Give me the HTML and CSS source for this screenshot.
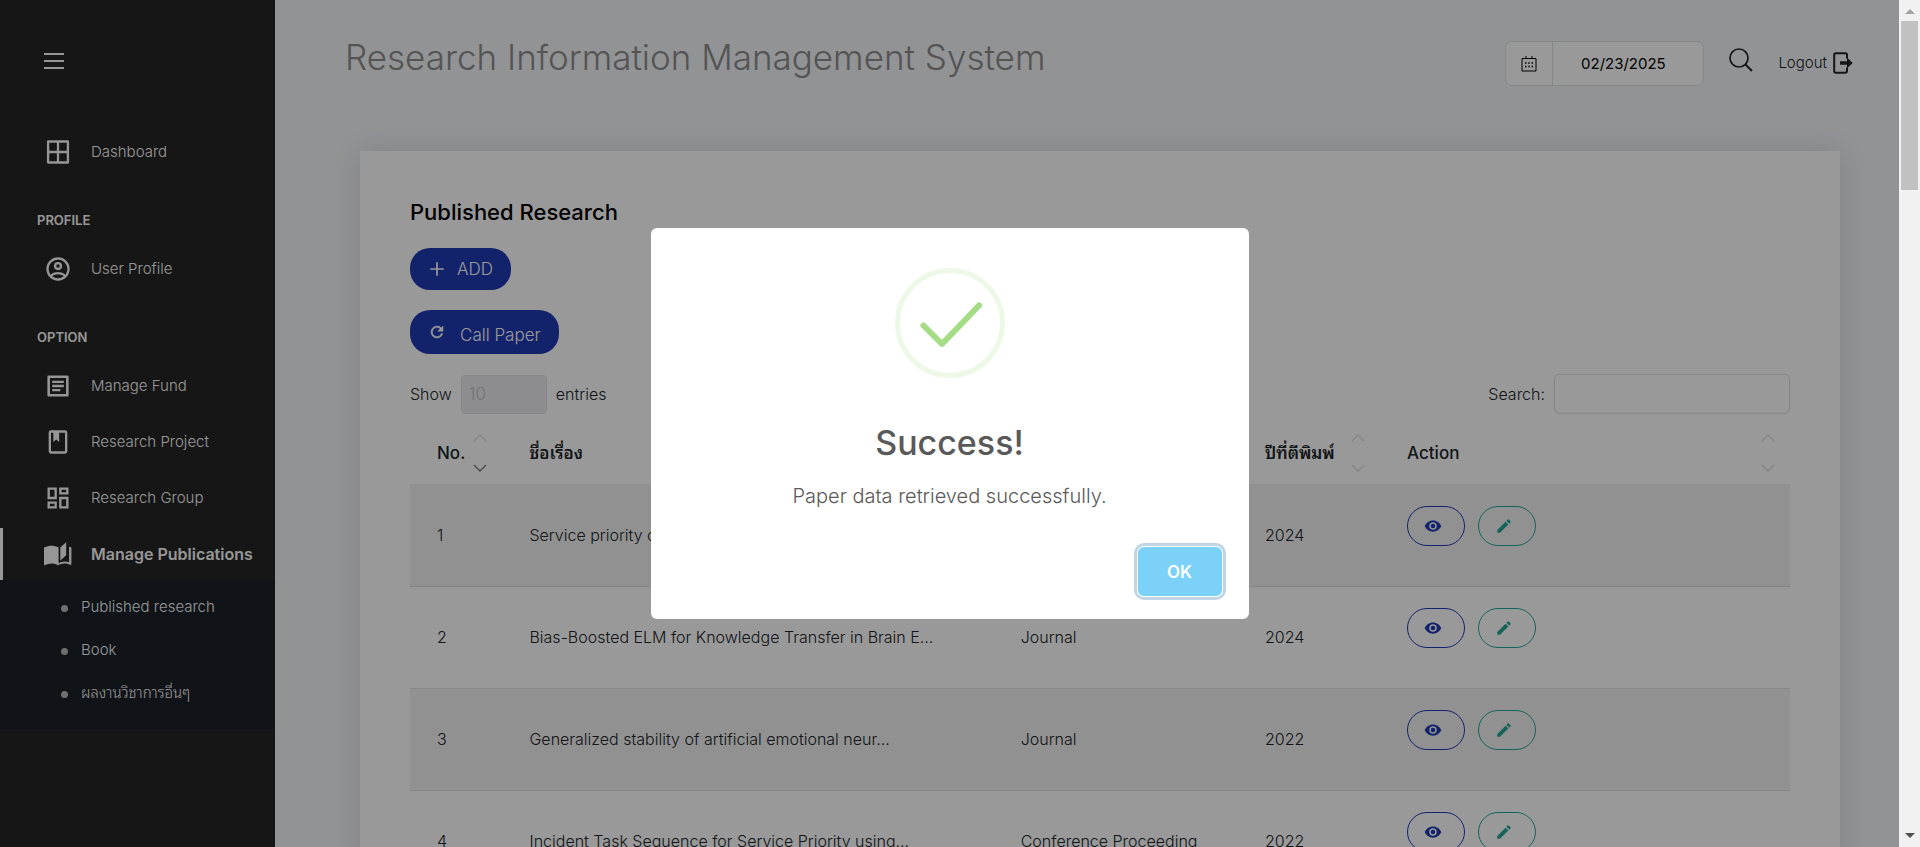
FILE: index.html
```html
<!DOCTYPE html>
<html lang="en">
<head>
<meta charset="utf-8">
<title>Research Information Management System</title>
<link rel="stylesheet" href="styles.css">
</head>
<body>
<svg class="sprite" aria-hidden="true">
  <symbol id="eye" viewBox="0 0 24 24"><path d="M12 9a3 3 0 1 0 0 6 3 3 0 0 0 0-6m0 8a5 5 0 1 1 0-10 5 5 0 0 1 0 10m0-12.500C7 4.500 2.730 7.610 1 12c1.730 4.390 6 7.500 11 7.500s9.270-3.110 11-7.500c-1.730-4.390-6-7.500-11-7.500"/></symbol>
  <symbol id="pencil" viewBox="0 0 24 24"><path d="M20.710 7.040c.390-.390.390-1.040 0-1.410l-2.340-2.340c-.370-.390-1.020-.390-1.410 0l-1.840 1.830 3.750 3.750M3 17.250V21h3.750L17.810 9.930l-3.750-3.750z"/></symbol>
  <symbol id="up" viewBox="0 0 14 8"><path d="M1 7l6-6 6 6" fill="none" stroke="currentColor" stroke-width="1.300"/></symbol>
  <symbol id="down" viewBox="0 0 14 8"><path d="M1 1l6 6 6-6" fill="none" stroke="currentColor" stroke-width="1.300"/></symbol>
</svg>
<div class="viewport">
  <div class="app">
    <nav class="sidebar">
      <button class="toggle" type="button" aria-label="Toggle menu"><span></span><span></span><span></span></button>
      <ul class="menu">
        <li><a class="item" href="#"><svg viewBox="0 0 24 24"><path d="M3.500 3h17v18h-17z" fill="none" stroke="currentColor" stroke-width="2" stroke-linejoin="round"/><path d="M12 3v18M3 12h18" stroke="currentColor" stroke-width="2"/></svg>Dashboard</a></li>
      </ul>
      <h2 class="group">PROFILE</h2>
      <ul class="menu">
        <li><a class="item" href="#"><svg viewBox="0 0 24 24"><path d="M12 2a10 10 0 1 0 0 20 10 10 0 0 0 0-20M7.070 18.280c.430-.900 3.050-1.780 4.930-1.780s4.510.880 4.930 1.780A7.900 7.900 0 0 1 12 20a7.900 7.900 0 0 1-4.930-1.720m11.290-1.450c-1.430-1.740-4.900-2.330-6.360-2.330s-4.930.590-6.360 2.330A8 8 0 1 1 20 12c0 1.820-.620 3.490-1.640 4.830M12 6a3.500 3.500 0 1 0 0 7 3.500 3.500 0 0 0 0-7m0 5a1.500 1.500 0 1 1 0-3 1.500 1.500 0 0 1 0 3"/></svg>User Profile</a></li>
      </ul>
      <h2 class="group">OPTION</h2>
      <ul class="menu">
        <li><a class="item" href="#"><svg viewBox="0 0 24 24"><path d="M4 4h16v16H4z" fill="none" stroke="currentColor" stroke-width="2.200" stroke-linejoin="round"/><path d="M7 8.500h10M7 12h10M7 15.500h7" stroke="currentColor" stroke-width="2"/></svg>Manage Fund</a></li>
        <li><a class="item" href="#"><svg viewBox="0 0 24 24"><path d="M18 2a2 2 0 0 1 2 2v16a2 2 0 0 1-2 2H6a2 2 0 0 1-2-2V4a2 2 0 0 1 2-2h12m0 2h-5v8l-2.500-2.250L8 12V4H6v16h12z"/></svg>Research Project</a></li>
        <li><a class="item" href="#"><svg viewBox="0 0 24 24"><path d="M19 5v2h-4V5h4M9 5v6H5V5h4m10 8v6h-4v-6h4M9 17v2H5v-2h4M21 3h-8v6h8V3M11 3H3v10h8V3m10 8h-8v10h8V11m-10 4H3v6h8v-6z"/></svg>Research Group</a></li>
        <li><a class="item active" href="#"><svg viewBox="0 0 24 24"><path d="M19 2l-5 4.500v11l5-4.500V2M6.500 5C4.550 5 2.450 5.400 0 6.500v14.660c0 .250.250.500.500.500C3 20.700 4.800 20.100 6.500 20.100c1.950 0 4.050.400 5.500 1.500 1.350-.850 3.800-1.500 5.500-1.500 1.650 0 3.350.300 4.750 1.050.600.250 1.250-.090 1.250-.250V6.500c-.600-.450-1.250-.750-2-1V19c-1.100-.350-2.300-.500-3.500-.500-1.700 0-4.150.650-5.500 1.500V6.500C10.550 5.400 8.450 5 6.500 5z"/></svg>Manage Publications</a></li>
      </ul>
      <ul class="submenu">
        <li><a href="#">Published research</a></li>
        <li><a href="#">Book</a></li>
        <li><a href="#">ผลงานวิชาการอื่นๆ</a></li>
      </ul>
    </nav>
    <main class="main">
      <header class="topbar">
        <h1>Research Information Management System</h1>
        <div class="tools">
          <div class="date">
            <span class="cal"><svg viewBox="0 0 16 16"><path d="M1 2.500h14v12.500H1zM5 0v3M11 0v3" fill="none" stroke="currentColor"/><path d="M4 7h1.500M7.200 7h1.500M10.500 7H12M4 10.500h1.500M7.200 10.500h1.500M10.500 10.500H12" stroke="currentColor" stroke-width="1.500"/></svg></span>
            <input type="text" value="02/23/2025" aria-label="Date">
          </div>
          <button class="find" type="button" aria-label="Search"><svg viewBox="0 0 24 24"><circle cx="10" cy="10" r="9" fill="none" stroke="currentColor" stroke-width="1.700"/><path d="M16.500 16.500l6.500 6.500" stroke="currentColor" stroke-width="2"/></svg></button>
          <a class="logout" href="#">Logout <svg viewBox="0 0 20 22"><path d="M14 6.500V3a1.800 1.800 0 0 0-1.800-1.800H3A1.800 1.800 0 0 0 1.200 3v16A1.800 1.800 0 0 0 3 20.800h9.200A1.800 1.800 0 0 0 14 19v-3.500" fill="none" stroke="currentColor" stroke-width="2"/><path d="M7 9.200h7V5.500l5.700 5.500-5.700 5.500v-3.700H7z"/></svg></a>
        </div>
      </header>
      <section class="card">
        <h2>Published Research</h2>
        <div class="actions">
          <a class="pill" href="#"><svg viewBox="0 0 16 16"><path d="M8 2v12M2 8h12" stroke="currentColor" stroke-width="1.500"/></svg>ADD</a>
          <a class="pill tall" href="#"><svg viewBox="0 0 24 24"><path d="M17.650 6.350C16.200 4.900 14.210 4 12 4a8 8 0 1 0 7.730 10h-2.080A6 6 0 1 1 12 6c1.660 0 3.140.690 4.220 1.780L13 11h7V4z" stroke="currentColor" stroke-width=".6"/></svg><span>Call Paper</span></a>
        </div>
        <div class="filters">
          <label>Show <select disabled><option>10</option></select> entries</label>
          <label>Search: <input type="search"></label>
        </div>
        <table>
          <colgroup><col class="c-no"><col class="c-title"><col class="c-type"><col class="c-year"><col></colgroup>
          <thead>
            <tr>
              <th><div>No.<span class="sort desc"><svg><use href="#up"/></svg><svg><use href="#down"/></svg></span></div></th>
              <th><div class="thai">ชื่อเรื่อง</div></th>
              <th></th>
              <th><div class="thai">ปีที่ตีพิมพ์<span class="sort"><svg><use href="#up"/></svg><svg><use href="#down"/></svg></span></div></th>
              <th><div>Action<span class="sort"><svg><use href="#up"/></svg><svg><use href="#down"/></svg></span></div></th>
            </tr>
          </thead>
          <tbody>
            <tr><td>1</td><td>Service priority classification</td><td>Journal</td><td>2024</td><td><div class="ops"><button class="view" type="button" aria-label="View"><svg><use href="#eye"/></svg></button><button class="edit" type="button" aria-label="Edit"><svg><use href="#pencil"/></svg></button></div></td></tr>
            <tr><td>2</td><td>Bias-Boosted ELM for Knowledge Transfer in Brain E...</td><td>Journal</td><td>2024</td><td><div class="ops"><button class="view" type="button" aria-label="View"><svg><use href="#eye"/></svg></button><button class="edit" type="button" aria-label="Edit"><svg><use href="#pencil"/></svg></button></div></td></tr>
            <tr><td>3</td><td>Generalized stability of artificial emotional neur...</td><td>Journal</td><td>2022</td><td><div class="ops"><button class="view" type="button" aria-label="View"><svg><use href="#eye"/></svg></button><button class="edit" type="button" aria-label="Edit"><svg><use href="#pencil"/></svg></button></div></td></tr>
            <tr><td>4</td><td>Incident Task Sequence for Service Priority using...</td><td>Conference Proceeding</td><td>2022</td><td><div class="ops"><button class="view" type="button" aria-label="View"><svg><use href="#eye"/></svg></button><button class="edit" type="button" aria-label="Edit"><svg><use href="#pencil"/></svg></button></div></td></tr>
          </tbody>
        </table>
      </section>
    </main>
    <div class="overlay">
      <div class="modal" role="dialog" aria-labelledby="modal-title">
        <svg class="tick" viewBox="0 0 110 110"><circle cx="55" cy="55" r="52.500" fill="none" stroke="#edf8e7" stroke-width="5"/><path d="M28.500 57.500l18.500 18.500 37-38.500" fill="none" stroke="#a5dc86" stroke-width="6" stroke-linecap="round" stroke-linejoin="round"/></svg>
        <h2 id="modal-title">Success!</h2>
        <p>Paper data retrieved successfully.</p>
        <button class="ok" type="button">OK</button>
      </div>
    </div>
  </div>
  <div class="scrollbar" aria-hidden="true"><span class="arrow-up"></span><span class="thumb"></span><span class="arrow-down"></span></div>
</div>
</body>
</html>
```
FILE: styles.css
```css
* { box-sizing: border-box; }
body { margin: 0; font-family: Inter, "Noto Sans Thai Looped", Loma, Garuda, sans-serif; font-size: 15px; font-weight: 300; line-height: 20px; color: #212529; }
h1, h2, p, ul { margin: 0; padding: 0; }
ul { list-style: none; }
a { color: inherit; text-decoration: none; }
button, input, select { font: inherit; color: inherit; margin: 0; padding: 0; }
svg { display: block; fill: currentColor; flex: none; }
.sprite { position: absolute; width: 0; height: 0; }

.viewport { display: flex; height: 100vh; overflow: hidden; }
.app { position: relative; flex: 1; display: flex; overflow: hidden; background: #f4f5f7; }

.sidebar { width: 275px; flex: none; background: #252526; color: #fafafa; }
.toggle { display: flex; flex-direction: column; gap: 5px; width: 20px; margin: 53px 0 57px 44px; border: 0; background: none; }
.toggle span { height: 2px; background: #fafafa; }
.menu { display: flex; flex-direction: column; gap: 4px; }
.item { display: flex; align-items: center; gap: 19px; height: 52px; padding-left: 44px; }
.item svg { width: 28px; height: 28px; }
.item.active { border-left: 3px solid #fff; padding-left: 41px; font-size: 16px; font-weight: 600; }
.group { padding: 32px 37px 13px; font-size: 13px; line-height: 20px; font-weight: 600; }
.submenu { padding: 5px 0 15px; background: #1b2128; }
.submenu a { display: flex; align-items: center; gap: 13px; height: 43px; padding-left: 61px; }
.submenu a::before { content: ""; width: 7px; height: 7px; margin-top: 3px; border-radius: 50%; background: #b9b9b9; }

.main { flex: 1; padding: 34px 46px 0 70px; }
.topbar { display: flex; justify-content: space-between; height: 117px; }
h1 { font-size: 35px; line-height: 47px; font-weight: 300; color: #8d8d8d; }
.tools { display: flex; align-items: flex-start; padding-top: 7px; }
.date { display: flex; width: 199px; height: 45px; border: 1px solid #dee2e2; border-radius: 7px; background: #fff; color: #000; overflow: hidden; }
.cal { display: flex; align-items: center; justify-content: center; width: 47px; border-right: 1px solid #dee2e2; }
.cal svg { width: 16px; height: 16px; }
.date input { flex: 1; min-width: 0; padding-right: 10px; border: 0; background: none; text-align: center; font-weight: 400; }
.find { margin: 7px 25px 0 25px; border: 0; background: none; }
.find svg { width: 24px; height: 24px; }
.logout { display: flex; align-items: center; gap: 6px; padding-top: 11px; }
.logout svg { width: 20px; height: 22px; }

.card { margin: 0 13px 0 15px; padding: 49px 50px; background: #fff; box-shadow: 0 0 25px rgba(60, 60, 70, 0.15); min-height: 100vh; font-size: 16px; }
.card h2 { font-size: 22px; line-height: 24px; font-weight: 500; color: #000; }
.actions { display: flex; flex-direction: column; align-items: flex-start; gap: 20px; padding: 24px 0 20px; }
.pill { display: flex; align-items: center; gap: 11px; height: 42px; padding: 0 18px; border-radius: 20px; background: #1f3bb3; color: #fff; font-size: 17px; }
.pill svg { width: 18px; height: 18px; }
.pill.tall { height: 44px; }
.pill.tall span { padding: 5px 0 0 3px; }
.filters { display: flex; justify-content: space-between; align-items: center; }
.filters label { display: flex; align-items: center; gap: 9px; }
.filters select { appearance: none; width: 86px; height: 39px; padding: 0 7px; border: 1px solid #dee2e6; border-radius: 4px; background: #ececf0; color: #c2c2c2; font-size: 17px; opacity: 1; }
.filters input { width: 236px; height: 40px; border: 1px solid #dee2e6; border-radius: 5px; background: #fff; }

table { width: 100%; table-layout: fixed; border-collapse: collapse; margin-top: 10px; }
.c-no { width: 6.7%; }
.c-title { width: 35.6%; }
.c-type { width: 17.7%; }
.c-year { width: 10.3%; }
th, td { padding: 0 27px; text-align: left; white-space: nowrap; }
th { height: 60px; padding-right: 15px; padding-bottom: 3px; font-size: 17px; font-weight: 500; }
th div { display: flex; align-items: center; justify-content: space-between; }
.thai { font-weight: 600; }
.sort { display: flex; flex-direction: column; gap: 22px; color: #dcdcdc; }
.sort svg { width: 14px; height: 8px; }
.sort.desc svg:last-child { color: #777; }
td { height: 102px; border-bottom: 1px solid #dee2e6; }
tbody tr:nth-child(odd) { background: #f2f2f2; }
.ops { display: flex; gap: 13px; margin-bottom: 18px; }
.ops button { width: 58px; height: 40px; padding: 0 0 0 16px; border: 1px solid; border-radius: 20px; background: none; }
.ops svg { width: 18px; height: 18px; }
.view { color: #1f3bb3; }
.edit { color: #26a69a; }

.overlay { position: absolute; inset: 0; display: flex; align-items: center; justify-content: center; background: rgba(0, 0, 0, 0.4); }
.modal { display: flex; flex-direction: column; align-items: center; width: 598px; padding: 40px 27px 23px; border-radius: 6px; background: #fff; color: #595959; text-align: center; }
.tick { width: 110px; height: 110px; }
.modal h2 { padding-top: 44px; font-size: 34px; line-height: 42px; font-weight: 500; }
.modal p { padding-top: 19px; font-size: 20px; line-height: 26px; }
.ok { align-self: flex-end; width: 84px; height: 49px; margin-top: 38px; border: 0; border-radius: 6px; background: #7cd1f9; color: #fff; font-size: 17px; font-weight: 600; box-shadow: 0 0 0 1px #fff, 0 0 0 4px rgba(43, 114, 165, 0.29); }

.scrollbar { display: flex; flex-direction: column; align-items: center; width: 21px; flex: none; padding: 9px 0; background: #f1f1f1; }
.arrow-up { border: 5px solid transparent; border-top: 0; border-bottom-color: #a3a3a3; }
.thumb { width: 17px; height: 169px; margin: 7px 0 auto; background: #c1c1c1; }
.arrow-down { border: 5px solid transparent; border-bottom: 0; border-top-color: #505050; }
```
